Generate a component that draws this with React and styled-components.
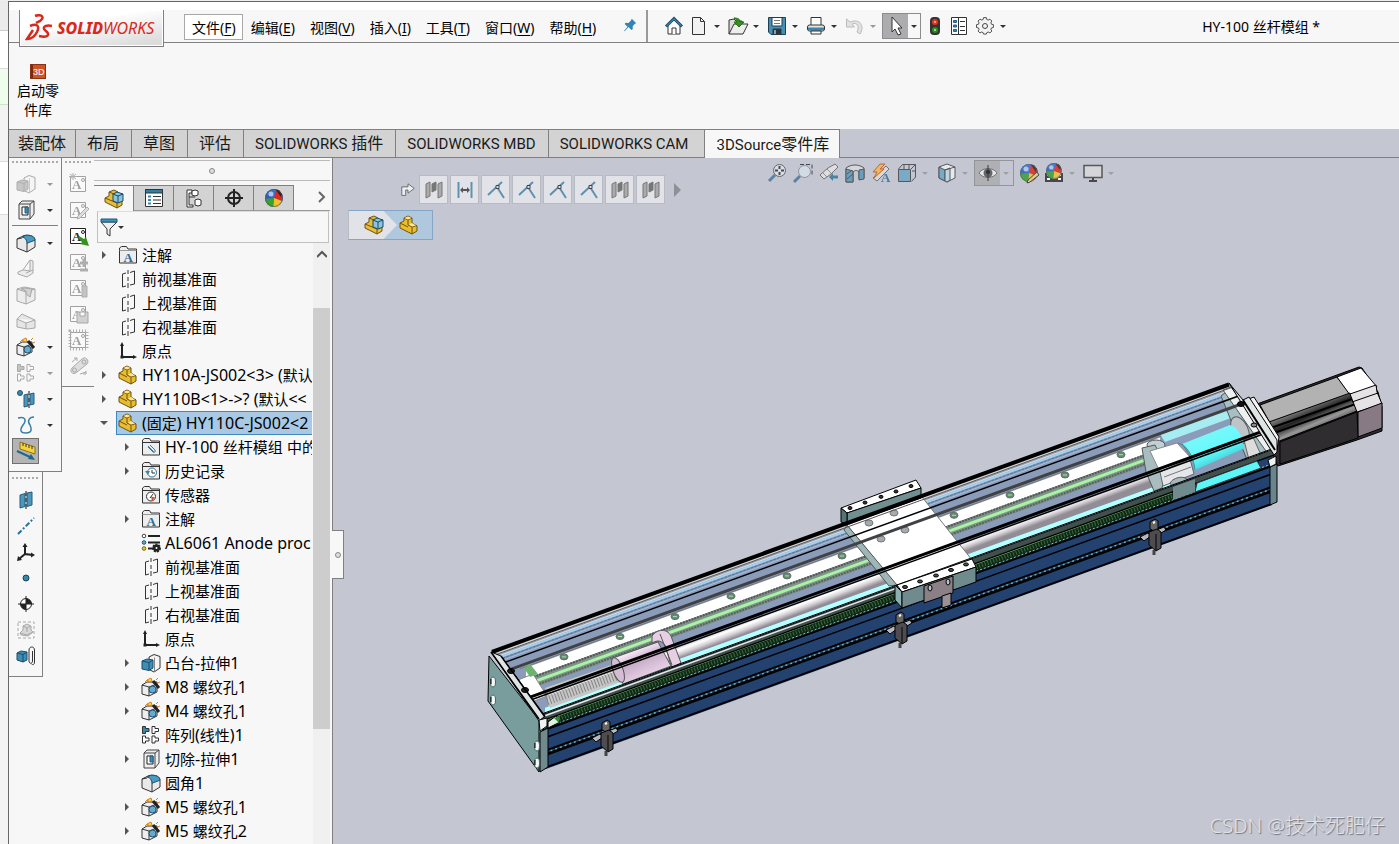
import React, { useState } from 'react';
import styled, { createGlobalStyle, css } from 'styled-components';

const GlobalStyle = createGlobalStyle`
  * {
    box-sizing: border-box;
  }

  body {
    margin: 0;
    background: #f3f3f3;
    color: #000;
    font-family: 'Noto Sans', 'Noto Sans CJK SC', sans-serif;
    font-size: 14px;
    overflow: hidden;
  }

  button {
    font: inherit;
    color: inherit;
    background: none;
    border: 0;
    padding: 0;
  }

  ul {
    list-style: none;
    margin: 0;
    padding: 0;
  }
`;

const LINE = '#808080';
const PANEL = '#f7f7f7';
const CANVAS = '#c4c7d2';

const Desktop = styled.div`
  display: flex;
  height: 100vh;
  padding-top: 1px;
  background: #efefef;
`;

const Backdrop = styled.div`
  display: flex;
  flex-direction: column;
  width: 8px;
  flex: none;
`;

const BackdropStrip = styled.div`
  height: ${props => props.size}px;
  background: ${props => props.fill};
  border-top: 1px solid ${props => props.edge || props.fill};
  flex: ${props => (props.grow ? '1' : 'none')};
`;

const AppWindow = styled.div`
  flex: 1;
  min-width: 0;
  display: flex;
  flex-direction: column;
  border-top: 1px solid #666;
  border-left: 1px solid #666;
  background: ${CANVAS};
`;

const Header = styled.header`
  display: flex;
  align-items: flex-start;
  height: 41px;
  border-top: 8px solid #fff;
  border-bottom: 1px solid ${LINE};
  background: ${PANEL};
  padding-left: 10px;
`;

const Logo = styled.div`
  display: flex;
  align-items: center;
  gap: 4px;
  width: 145px;
  height: 37px;
  padding-left: 5px;
  border: 1px solid ${LINE};
  border-top: 0;
  background: linear-gradient(170deg, #fff 35%, #dcdcdc 90%);
  box-shadow: inset 0 0 0 1px #fff;
  color: #da291c;
  font-size: 16px;
  font-style: italic;
  position: relative;
  z-index: 1;
  flex: none;

  b {
    font-weight: 800;
  }
`;

const Menu = styled.nav`
  display: flex;
  margin: 4px 0 0 20px;
`;

const MenuButton = styled.button`
  height: 26px;
  padding: 0 6px 0 7px;
  border: 1px solid ${props => (props.$active ? '#a8a8a8' : 'transparent')};
  background: ${props => (props.$active ? '#fff' : 'transparent')};
  white-space: nowrap;

  u {
    text-underline-offset: 2px;
  }
`;

const PinButton = styled.button`
  width: 26px;
  height: 33px;
  margin-left: 14px;
`;

const QuickBar = styled.div`
  display: flex;
  align-items: center;
  height: 32px;
  margin-left: 3px;
  padding-left: 13px;
  border-left: 2px solid #999;
`;

const ToolGroup = styled.div`
  display: flex;
  align-items: center;
  width: ${props => props.$width}px;
  height: 26px;
  flex: none;
  opacity: ${props => (props.$soft ? 0.85 : 1)};
  ${props =>
    props.$pressed &&
    css`
      border: 1px solid #8c8c90;
      background: linear-gradient(90deg, #acacae 25px, transparent 25px);
      margin-right: 3px;
    `}
`;

const IconButton = styled.button`
  display: flex;
  align-items: center;
  justify-content: center;
  width: ${props => props.$width || 26}px;
  height: 26px;
  flex: none;
`;

const Arrow = styled.span`
  width: 0;
  height: 0;
  border: 3px solid transparent;
  border-top-color: ${props => (props.$dim ? '#999' : '#333')};
  border-bottom: 0;
`;

const DocumentTitle = styled.div`
  margin: 7px 79px 0 auto;
  line-height: 20px;
  white-space: nowrap;
`;

const Ribbon = styled.section`
  height: 86px;
  padding: 20px 6px 0;
  background: ${PANEL};
`;

const RibbonButton = styled.button`
  display: flex;
  flex-direction: column;
  align-items: center;
  width: 46px;
  line-height: 19px;
`;

const Tabs = styled.div`
  display: flex;
  border-bottom: 1px solid ${LINE};
  height: 29px;
  flex: none;
`;

const Tab = styled.button`
  height: ${props => (props.$active ? 29 : 28)}px;
  padding: 0 ${props => props.$end || 12}px ${props => (props.$mixed ? 3 : 0)}px ${props => props.$start || 11}px;
  border-top: 1px solid ${LINE};
  border-right: 1px solid ${LINE};
  background: ${props => (props.$active ? PANEL : '#d3d3d3')};
  color: #1a1a1a;
  font-family: Roboto, 'Noto Sans CJK SC', sans-serif;
  font-size: 15px;
  white-space: nowrap;

  span {
    font-size: 16px;
  }
`;

const Body = styled.div`
  flex: 1;
  min-height: 0;
  display: flex;
`;

const Docks = styled.aside`
  display: flex;
  align-items: flex-start;
  width: 85px;
  background: ${PANEL};
  flex: none;
`;

const DockColumn = styled.div`
  display: flex;
  flex-direction: column;
`;

const Dock = styled.div`
  display: flex;
  flex-direction: column;
  width: ${props => props.$width}px;
  padding: ${props => props.$top || 3}px 3px 7px;
  border-bottom: 1px solid ${LINE};
  border-right: ${props => (props.$open ? '0' : `1px solid ${LINE}`)};
`;

const Grip = styled.div`
  height: 2px;
  margin-bottom: 8px;
  background: repeating-linear-gradient(90deg, #aaa 0 2px, transparent 2px 4px);
`;

const DockRow = styled.div`
  display: flex;
  align-items: center;
  justify-content: space-between;
  height: 26px;
  padding-right: 5px;
`;

const DockButton = styled.button`
  display: flex;
  align-items: center;
  justify-content: center;
  width: 27px;
  height: 26px;
  flex: none;
  border: 1px solid ${props => (props.$active ? '#707070' : 'transparent')};
  background: ${props => (props.$active ? '#b4b4b4' : 'transparent')};
  ${props =>
    props.$dim &&
    css`
      svg {
        filter: grayscale(1);
        opacity: 0.4;
      }
    `}
`;

const DockRule = styled.hr`
  width: 100%;
  margin: 2px 0 4px;
  border: 0;
  border-top: 1px solid ${LINE};
`;

const FeaturePanel = styled.section`
  display: flex;
  flex-direction: column;
  width: 239px;
  padding: 2px 2px 0 0;
  border-right: 1px solid ${LINE};
  background: ${PANEL};
  flex: none;
  position: relative;
`;

const PanelGrip = styled.div`
  display: flex;
  align-items: center;
  justify-content: center;
  height: 21px;
  border-top: 1px solid #bbb;
  border-bottom: 1px solid #bbb;
`;

const Knob = styled.span`
  width: 6px;
  height: 6px;
  border: 1px solid #888;
  border-radius: 50%;
  background: #ddd;
`;

const PanelTabs = styled.div`
  display: flex;
  margin-top: 4px;
  height: 26px;
  border-bottom: 1px solid #999;
  flex: none;
`;

const PanelTab = styled.button`
  display: flex;
  align-items: center;
  justify-content: center;
  width: 40px;
  height: ${props => (props.$active ? 26 : 25)}px;
  border-top: 1px solid ${LINE};
  border-right: 1px solid ${LINE};
  background: ${props => (props.$active ? PANEL : '#d3d3d3')};
`;

const MoreButton = styled.button`
  width: 16px;
  margin-left: auto;
`;

const FilterBox = styled.div`
  display: flex;
  align-items: center;
  height: 32px;
  margin: 0 1px 0 3px;
  padding-left: 2px;
  border: 1px solid #c0c0c0;
  border-top-color: #ddd;
  flex: none;
`;

const FilterInput = styled.input`
  flex: 1;
  min-width: 0;
  height: 28px;
  border: 0;
  outline: 0;
  background: transparent;
`;

const TreeArea = styled.div`
  flex: 1;
  min-height: 0;
  display: flex;
`;

const Tree = styled.ul`
  flex: 1;
  min-width: 0;
  overflow: hidden;
`;

const TreeRow = styled.li`
  display: flex;
  align-items: center;
  height: 24px;
  padding-left: ${props => 6 + props.$level * 23}px;
`;

const Expander = styled.button`
  display: flex;
  align-items: center;
  width: 16px;
  height: 24px;
  flex: none;
`;

const TreeItem = styled.div`
  display: flex;
  align-items: center;
  gap: 5px;
  flex: 1;
  min-width: 0;
  height: 24px;
  padding-left: 2px;
  border: 1px solid ${props => (props.$selected ? '#3f88bf' : 'transparent')};
  border-right: 0;
  background: ${props => (props.$selected ? '#a8c8e4' : 'transparent')};
  overflow: hidden;

  svg {
    flex: none;
  }
`;

const Label = styled.span`
  font-size: 15px;
  line-height: 22px;
  white-space: nowrap;
`;

const Latin = styled.span`
  font-size: 16px;
`;

const Scrollbar = styled.div`
  display: flex;
  flex-direction: column;
  align-items: center;
  width: 17px;
  margin-left: 1px;
  background: #f0f0f0;
  flex: none;
`;

const ScrollArrow = styled.button`
  width: 17px;
  height: 65px;
  flex: none;
  padding-top: 4px;
  display: flex;
  justify-content: center;
`;

const ScrollThumb = styled.div`
  width: 17px;
  height: 70%;
  background: #cdcdcd;
`;

// the collapse handle hangs over the edge of the graphics area
const CollapseHandle = styled.button`
  position: absolute;
  left: 100%;
  top: 372px;
  width: 12px;
  height: 49px;
  display: flex;
  align-items: center;
  justify-content: center;
  border: 1px solid ${LINE};
  border-left: 0;
  background: ${PANEL};
`;

const Graphics = styled.main`
  flex: 1;
  min-width: 0;
  display: flex;
  flex-direction: column;
  position: relative;
`;

const GraphicsTop = styled.div`
  display: flex;
  align-items: flex-start;
  height: 82px;
  padding: 2px 0 0 15px;
  flex: none;
`;

const SelectionTools = styled.div`
  width: 416px;
  padding-top: 15px;
  flex: none;
`;

const MateBar = styled.div`
  display: flex;
  align-items: center;
  gap: 2px;
  height: 29px;
  padding-left: 50px;
`;

const MateButton = styled.button`
  display: flex;
  align-items: center;
  justify-content: center;
  width: 29px;
  height: 29px;
  border: 1px solid #b9bbc2;
  background: #e2e3e8;
`;

const Crumbs = styled.div`
  display: flex;
  align-items: center;
  width: 85px;
  height: 30px;
  margin-top: 6px;
  border: 1px solid #84a4c8;
  border-left-color: #b9bbc2;
  background: #b0c8de;
`;

const Crumb = styled.button`
  display: flex;
  align-items: center;
  justify-content: flex-end;
  width: ${props => (props.$first ? 48 : 21)}px;
  height: 28px;
  padding-right: ${props => (props.$first ? 14 : 0)}px;
  background: ${props => (props.$first ? '#e2e3e8' : 'transparent')};
  clip-path: ${props => (props.$first ? 'polygon(0 0, 72% 0, 100% 50%, 72% 100%, 0 100%)' : 'none')};
`;

const HeadsUp = styled.div`
  display: flex;
  align-items: center;
  height: 26px;
`;

const Stage = styled.div`
  flex: 1;
  min-height: 0;

  svg {
    display: block;
    width: 100%;
    height: 100%;
  }
`;

const Watermark = styled.div`
  position: absolute;
  right: 14px;
  bottom: 4px;
  color: #e2e3e7;
  font-size: 20px;
  font-weight: 300;
  line-height: 28px;
  text-shadow: 1px 1px 1px #70727a;
  white-space: nowrap;
`;

const INK = '#333';
const BLUE = '#3c86ad';

const drawings = {
  home: (
    <g stroke={INK} fill="#fff">
      <path d="M3 8v9h12V8L9 3z" />
      <path d="M7 17v-6h4v6" />
      <path d="M1 9.500L9 1.500l8 8" fill="none" stroke="#1c4f6e" strokeWidth="3" />
      <path d="M1.500 9L9 1.800l7.500 7.200" fill="none" stroke="#4b9cc4" />
    </g>
  ),
  page: <path d="M2.500 .5h8l4 4v13h-12zM10.500 .5v4h4" fill="#f1f1f1" stroke={INK} />,
  open: (
    <g stroke={INK}>
      <path d="M0 17V3l5-1 2 2h6v3" fill="#ddd" />
      <path d="M0 17L5 7h14l-5 10z" fill="#eee" />
      <path d="M5 1c4 0 6 1 6 4h4l-5 5-5-5h3c0-2-1-3-3-4z" fill="#36921e" stroke="#257010" />
    </g>
  ),
  save: (
    <g stroke="#1f3f52">
      <path d="M.5 .5h17v17H3L.5 15z" fill="#4690b6" />
      <path d="M4 .5h10V9H4z" fill="#fff" />
      <path d="M6 3.500h6M6 6.500h6" stroke="#777" />
      <path d="M5 12h8v5H5z" fill="#333" />
      <path d="M7 13v4" stroke="#fff" />
    </g>
  ),
  print: (
    <g stroke={INK}>
      <path d="M4 8V.5h10V8" fill="#fff" />
      <rect x=".5" y="8" width="17" height="6" rx="2" fill="#e6e6e6" />
      <path d="M1 12h16" stroke={BLUE} strokeWidth="3" />
      <path d="M4 14h10v3H4z" fill="#fff" />
    </g>
  ),
  undo: <path d="M.5 2v8h8L6 7c5-2 8 2 5 8l3 2c5-8 0-16-10-12z" fill="#e2e2e2" stroke="#bbb" />,
  cursor: <path d="M5 0v15l3-3 3 6 3-1-3-6h4z" fill="#fff" stroke="#333" />,
  traffic: (
    <g>
      <rect x="4" y="0" width="10" height="18" rx="4" fill="#333" />
      <circle cx="9" cy="5" r="3" fill="#e5341b" />
      <circle cx="9" cy="13" r="3" fill="#2f8a22" />
      <circle cx="9" cy="5" r="1" fill="#ffb7a8" />
      <circle cx="9" cy="13" r="1" fill="#b9eab0" />
    </g>
  ),
  options: (
    <g stroke={INK} fill="#fff">
      <path d="M1.500 .5h15v17h-15z" />
      <path d="M10 4.500h5M10 9.500h5M10 13.500h5M8.500 1v16" />
      <path d="M3.500 3.500h3v2h-3zM3.500 8h3v2h-3zM3.500 12.500h3v2h-3z" fill={BLUE} stroke="#255f80" />
    </g>
  ),
  gear: (
    <g stroke="#444" fill="#f3f3f3">
      <path d="M7.500 1h3l.5 2 1.500.6 1.800-1 2 2-1 1.900.6 1.500 2.100.5v3l-2.100.5-.6 1.500 1 1.800-2 2-1.800-1-1.500.6-.5 1.600h-3l-.5-1.600-1.500-.6-1.800 1-2-2 1-1.800-.6-1.500L0 11.500v-3L2.100 8l.6-1.500-1-1.900 2-2 1.800 1L7 3z" transform="translate(.5 -.3) scale(.94)" />
      <circle cx="9" cy="9" r="2.500" />
    </g>
  ),
  pin: <path d="M11 2l5 5-1.500.7-2.500 2.800.2 3-1.700 1-3.200-3.200L3 16l-.6-.6 3.800-4.500L3 8l1-1.500 3.200.2 2.700-2.600z" fill="#2f86b5" />,
  source: (
    <g>
      <rect x="1.500" y="1.500" width="15" height="14" fill="#cf5423" stroke="#8b3213" />
      <path d="M3 2v13" stroke="#772a10" strokeWidth="2" />
      <text x="4" y="12" fontSize="9" fontFamily="Liberation Sans, sans-serif" fill="#fff">3D</text>
    </g>
  ),
  asm: (
    <g stroke="#6d5310" strokeLinejoin="round">
      <path d="M0 8l4-2V2l5-2 4 2v5l4 3v5l-5 3L0 12z" fill="#e9bd34" />
      <path d="M0 8l12 5v5M4 2l5 2v4" fill="none" />
      <path d="M8 4l4-2 6 2v7l-5 2-5-2z" fill="#8cc4df" stroke="#174a66" />
      <path d="M8 4l5 2v7M13 6l5-2" fill="none" stroke="#174a66" />
    </g>
  ),
  part: (
    <g stroke="#6d5310" strokeLinejoin="round">
      <path d="M0 7l4-2V2l4-2 4 2v5l5 3v5l-5 3L0 12z" fill="#eabd2e" />
      <path d="M4 2l4 2 4-2M8 4v5l4 2 5-1.500M12 11v7M0 7l8 4" fill="none" />
      <path d="M4.500 2L8 .5 11.500 2 8 3.500zM9 8.500l3-1.500 4 2.500-4 1z" fill="#ffe79a" stroke="none" />
    </g>
  ),
  list: (
    <g stroke={INK}>
      <path d="M.5 .5h17v17H.5z" fill="#fff" />
      <path d="M.5 .5h17V4H.5z" fill="#2e7ea8" />
      <path d="M8 7.500h8M8 11h8M8 14.500h8" />
      <path d="M3 7.500h3M3 11h3M3 14.500h3" stroke={BLUE} strokeWidth="2" />
    </g>
  ),
  config: (
    <g stroke={INK} fill="#fff">
      <path d="M2 1h5v3H4v12h4v2H2zM4 8h6" />
      <path d="M7 2l3-1 3 1v4l-3 1-3-1zM10 11l3-1 3 1v5l-3 1-3-1z" />
    </g>
  ),
  target: (
    <g fill="none" stroke="#222" strokeWidth="2">
      <circle cx="9" cy="9" r="6" />
      <path d="M9 0v18M0 9h18" />
    </g>
  ),
  ball: (
    <g>
      <circle cx="9" cy="9" r="9" fill="#2f62c0" />
      <path d="M9 9L1 5a9 9 0 0 1 12-4z" fill="#3272d6" />
      <path d="M9 9l2-9a9 9 0 0 1 6 12z" fill="#db2a20" />
      <path d="M9 9l8 3a9 9 0 0 1-9 6z" fill="#f1c02c" />
      <path d="M9 9l-1 9a9 9 0 0 1-8-8z" fill="#3aa02f" />
      <path d="M11 1l5 7 1-3-3-4z" fill="#222" />
      <circle cx="6" cy="5" r="2.500" fill="#fff" opacity=".6" />
      <circle cx="9" cy="9" r="8.500" fill="none" stroke="#555" strokeWidth=".7" />
    </g>
  ),
  funnel: (
    <g stroke={INK}>
      <path d="M1 4l6 7v5l3 2v-7l7-7z" fill="#eee" />
      <path d="M1 1h16v3H1z" fill="#3b93bf" stroke="#1d5877" />
    </g>
  ),
  annotation: (
    <g>
      <path d="M.5 17V2l2-1.500h5L9 3h8.500v14z" fill="#ededed" stroke={INK} />
      <path d="M.5 4.500h17" stroke="#999" />
      <text x="4.500" y="15.500" fontSize="13" fontWeight="700" fontFamily="Liberation Serif, serif" fill="#2a6c94">A</text>
    </g>
  ),
  mates: (
    <g stroke={INK}>
      <path d="M.5 17V2l2-1.500h5L9 3h8.500v14zM.5 4.500h17" fill="#ededed" />
      <path d="M6 8l6 6M8 7l5 5c1 2-1 3-2 2L6 9" fill="none" stroke="#347ea5" />
    </g>
  ),
  history: (
    <g stroke={INK}>
      <path d="M.5 17V2l2-1.500h5L9 3h8.500v14zM.5 4.500h17" fill="#ededed" />
      <circle cx="10" cy="10.500" r="4.500" fill="#fff" stroke="#2f6f95" />
      <path d="M10 8v3h3" fill="none" />
      <path d="M3 9l3 4 2-4z" fill={BLUE} stroke="none" />
    </g>
  ),
  sensor: (
    <g stroke={INK}>
      <path d="M.5 17V2l2-1.500h5L9 3h8.500v14zM.5 4.500h17" fill="#ededed" />
      <circle cx="9" cy="10.500" r="4.500" fill="#fff" />
      <path d="M9 10.500l4 1-3 3.500z" fill="#e14e22" stroke="none" />
      <path d="M8 12l3-4" />
    </g>
  ),
  plane: (
    <g fill="none" stroke="#333">
      <path d="M7 3L3.500 4v13L7 16M11 2.500l4.500-1.500v13l-4.500 1" />
      <path d="M9 0v4M9 7v4M9 13v5" />
    </g>
  ),
  origin: (
    <g stroke="#222" fill="#222" strokeWidth="2">
      <path d="M3 3v12h12" fill="none" />
      <path d="M3 0l2 4H1zM18 15l-4-2v4zM1.500 13.500h3v3h-3z" stroke="none" />
    </g>
  ),
  material: (
    <g>
      <path d="M6 2h12M6 8.500h12M6 14.500h6" stroke="#222" strokeWidth="2" />
      <circle cx="2" cy="2" r="1.800" fill="#fff" stroke="#444" />
      <circle cx="2" cy="8.500" r="1.800" fill="#63a9cc" stroke="#215472" />
      <circle cx="2" cy="14.500" r="1.800" fill="#efc52f" stroke="#80620f" />
      <circle cx="14.500" cy="14" r="3.500" fill="#222" stroke="#222" strokeDasharray="2 1" strokeWidth="2" />
      <circle cx="14.500" cy="14" r="1" fill="#fff" />
    </g>
  ),
  extrude: (
    <g stroke="#333" strokeLinejoin="round">
      <path d="M7 3l5-2.500 6 2V14l-6 4-4-2z" fill="#f4f4f4" />
      <path d="M12.500 3.500v14" stroke="#888" />
      <path d="M0 7l5-2 6 1v8l-4 2.500L0 15z" fill="#3f8db4" stroke="#1b4d69" />
      <path d="M0 7l7 1.500 4-2.500M7 8.500v8" fill="none" stroke="#1b4d69" />
    </g>
  ),
  hole: (
    <g stroke="#333" strokeLinejoin="round">
      <path d="M0 7l5-3h10v10l-8 4-7-2z" fill="#eee" />
      <path d="M0 7l7 2 8-3M7 9v9" fill="none" />
      <circle cx="10.500" cy="11.500" r="3.500" fill="#65acd0" stroke="#1d4e6a" />
      <path d="M11 3l6 7" stroke="#222" strokeWidth="3" />
      <path d="M5 2l4-2 1 3-2 1zM14 2l2-2M16 5l2-1M3 4l2-2" stroke="#d8801c" fill="#ffd34a" />
    </g>
  ),
  pattern: (
    <g stroke={INK} fill="#fff">
      <path d="M.5 .5h3v2H7v3H3.500v2h-3z" fill="#3c86ad" />
      <path d="M10 .5h3v2h3.500v3H13v2h-3zM.5 10h3v2H7v3H3.500v2h-3zM10 10h3v2h3.500v3H13v2h-3z" />
    </g>
  ),
  cut: (
    <g stroke="#444" strokeLinejoin="round">
      <path d="M2 3l3-3h12v13l-4 5H2z" fill="#eee" />
      <path d="M13 3l4-3M2 3h11v15" fill="none" />
      <path d="M5 6h6v8H5z" fill="#fff" stroke="#222" />
      <path d="M8 6h3v6H8z" fill="#3c8db6" stroke="#225f80" />
    </g>
  ),
  fillet: (
    <g stroke="#333" strokeLinejoin="round">
      <path d="M0 5l7-3.500c7-1 11 1 11 5V13l-8 5-10-4z" fill="#e9e9e9" />
      <path d="M5 3l4-1.800c6 0 9 2 9 5l-8 3c0-3-2-6-5-6.200z" fill="#4b9ac2" stroke="#1e536f" />
      <path d="M10 9v9M0 5l5-1" />
    </g>
  ),
  rib: <path d="M1 12l5-2 7-10 3 1v12l-6 4-9-3zM6 10l7 1V1M9 13l7-3" fill="#ddd" stroke={INK} />,
  shell: (
    <g stroke={INK} strokeLinejoin="round">
      <path d="M0 3l7-2 11 2v11l-9 4-9-3z" fill="#ddd" />
      <path d="M0 3l9 3v12M9 6l9-3" fill="none" />
      <path d="M4 3l4-1 7 1-2 8-4-3V5z" fill="#999" />
    </g>
  ),
  draft: <path d="M0 7l5-5 13 6v8l-8 1-10-2zM0 7l9 4 9-3M9 11v6" fill="#ccc" stroke={INK} />,
  refplane: (
    <g>
      <path d="M3 4l5-1.500v13L3 17zM10 2l5-1v13l-5 1.500z" fill="#4b97bd" stroke="#265d7b" />
      <path d="M9 0v5M9 7v4M9 13v5" stroke="#111" />
    </g>
  ),
  mirror: (
    <g>
      <circle cx="3" cy="3" r="2.500" fill={BLUE} stroke="#205571" />
      <path d="M7 5l4-1v12l-4 1zM13 4l4-1v11l-4 1z" fill="#4b97bd" stroke="#265d7b" />
      <path d="M12 1v4M12 8v4M12 14v4" stroke="#111" />
    </g>
  ),
  curve: <path d="M1 2c7-2 9 2 5 7-4 6-2 8 3 8 6 0 6-4 4-8-3-4-1-8 4-8" fill="none" stroke="#347fa8" strokeWidth="1.500" />,
  ruler: (
    <g>
      <path d="M3 0l15 5v7L3 7z" fill="#f5d23c" stroke="#8b7519" />
      <path d="M6 1v3M9 2v3M12 3v3M15 4v3" stroke="#333" />
      <path d="M0 9l13 6" stroke="#1f678f" strokeWidth="2" />
      <path d="M18 18l-7-1 3-5z" fill="#1f678f" />
    </g>
  ),
  axis: <path d="M1 17L17 1" stroke="#2a7299" strokeWidth="2" strokeDasharray="5 2 2 2" />,
  csys: (
    <g stroke="#222" strokeWidth="2" fill="#222">
      <path d="M8 2v9l8 1M8 11l-6 5" fill="none" />
      <path d="M8 0l2.500 4h-5zM18 12l-4-2.500v5zM0 18l1-5 4 4z" stroke="none" />
    </g>
  ),
  point: <circle cx="9" cy="9" r="3" fill={BLUE} stroke="#19435b" />,
  mass: (
    <g>
      <circle cx="9" cy="9" r="5.500" fill="#fff" stroke="#222" />
      <path d="M9 9V3.500A5.500 5.500 0 0 1 14.500 9zM9 9v5.500A5.500 5.500 0 0 1 3.500 9z" fill="#222" />
      <path d="M9 1v16M1 9h16" stroke="#222" />
    </g>
  ),
  box: (
    <g stroke={INK}>
      <path d="M1 1h16v16H1z" fill="none" strokeDasharray="3 2" />
      <path d="M3 12l3-3V5l4-2 4 2v4l2 2-5 4-7-1z" fill="#aaa" />
      <path d="M6 5l4 2 4-2M10 7v4M3 12l7 2 6-3" fill="none" />
    </g>
  ),
  clip: (
    <g>
      <path d="M0 6l4-2 6 1v8l-4 2-6-2z" fill="#3f8db4" stroke="#1b4d69" />
      <path d="M0 6l6 1.500L10 5M6 7.500V15" fill="none" stroke="#1b4d69" />
      <path d="M15.500 4v10c0 3-3.500 3-3.500 0V3c0-4 5.500-4 5.500 0v12c0 3-2 3-3 2" fill="none" stroke="#333" />
    </g>
  ),
  note: (
    <g>
      <path d="M.5 1.500h15v15H.5z" fill="#fff" stroke="#222" />
      <text x="2" y="14" fontSize="13" fontWeight="700" fontFamily="Liberation Serif, serif" fill="#222">A</text>
      <circle cx="13" cy="5" r="1.500" fill="none" stroke="#222" />
    </g>
  ),
  chain: (
    <g fill="none" stroke={INK}>
      <path d="M2 5l5-4M7 4V1H4M13 17h3v-3M10 17l6-2" />
      <path d="M3 10l9-8c3-3 8 1 5 5l-10 8c-4 4-9-1-4-5z" fill="#bbb" />
      <circle cx="14" cy="5" r="2" />
      <circle cx="4.500" cy="13" r="2" />
    </g>
  ),
  turn: <path d="M1 16V5h8V1l8 6-8 6V9H6v7z" fill="#eceef1" stroke="#555" />,
  mate: (
    <g stroke="#777" fill="#ababab">
      <path d="M1 3l4-2v14l-4 2zM13 3l4-2v14l-4 2z" />
      <path d="M7 3l4-2v8l-4 2z" fill="#777" />
    </g>
  ),
  distance: (
    <g stroke="#5f93b2" strokeWidth="2">
      <path d="M2.500 1v16M15.500 1v16" />
      <path d="M5 9h8" stroke="#555" />
      <path d="M4 9l3-3v6zM14 9l-3-3v6z" fill="#555" stroke="none" />
    </g>
  ),
  vertex: (
    <g>
      <path d="M1 14L15 1M10 6l7 11" stroke="#5f91ae" strokeWidth="2" />
      <path d="M9 4.500h3v3H9z" fill="#ddd" stroke="#444" />
    </g>
  ),
  zoomfit: (
    <g>
      <path d="M1 17l6-6" stroke="#49789a" strokeWidth="3" />
      <circle cx="11.500" cy="6.500" r="6" fill="#dce2ea" stroke="#555" />
      <path d="M11.500 2v3M11.500 8v3M7 6.500h3M13 6.500h3" stroke="#333" strokeWidth="2" />
    </g>
  ),
  zoomarea: (
    <g>
      <path d="M6 .5h12V12" fill="none" stroke="#333" strokeDasharray="4 2" />
      <path d="M0 18l6-6" stroke="#49789a" strokeWidth="3" />
      <circle cx="10.500" cy="7.500" r="6" fill="#d5dfe8" stroke="#888" />
    </g>
  ),
  prevview: (
    <g>
      <path d="M0 11l4 4 7-5 7-7-3-3-7 4z" fill="#e3e3e3" stroke="#666" />
      <path d="M3 9l4 4M7 5l4 4" stroke="#888" />
      <path d="M9 13l4-4v2.500h5v3h-5V17z" fill="#39769b" />
    </g>
  ),
  section: (
    <g stroke="#444">
      <path d="M0 4c5-4 13-4 18 0v10l-5 1V8c-2-2-4-2-6 0v10H0z" fill="#d7dade" />
      <path d="M0 5l7 2v11H0zM13 6l5-1v10l-5 1z" fill="#5a98ba" />
      <path d="M1 10l5-4M1 15l6-5" />
    </g>
  ),
  dynamic: (
    <g>
      <path d="M1 14l4 3L17 5l-3-3z" fill="#ddd" stroke="#666" />
      <path d="M8 0L1 8h4l-3 6L12 5H8l5-5z" fill="#f4b64f" stroke="#c0561a" />
      <text x="9" y="18" fontSize="13" fontWeight="700" fontFamily="Liberation Serif, serif" fill="#356f93">A</text>
    </g>
  ),
  orient: (
    <g stroke="#444" fill="none">
      <path d="M.5 5l4-4.500h13V13l-4 4.500M13 5l4.500-4.500M18 7h-4M6 1v4M11 1v4" />
      <path d="M.5 5.500h12v12H.5z" fill="#6fa6c5" />
    </g>
  ),
  cube: (
    <g stroke="#444">
      <path d="M1 3l8-3 8 3v11l-8 4-8-4z" fill="#eef0f2" />
      <path d="M1 3l6 3v11l-6-3z" fill="#6ba5c5" />
      <path d="M7 6l5-2v12l-3 2-2-1z" fill="#b7d9ea" />
      <path d="M7 6l10-3" />
    </g>
  ),
  eye: (
    <g>
      <path d="M0 9c4-6 14-6 18 0-4 6-14 6-18 0z" fill="#eee" stroke="#666" />
      <circle cx="9" cy="9" r="4.500" fill="#555" />
      <circle cx="9" cy="8" r="2" fill="#111" />
      <path d="M9 1v16" stroke="#222" />
    </g>
  ),
  screen: (
    <g>
      <path d="M0 1.500h18v12H0z" fill="#d8d9dc" stroke="#444" strokeWidth="1.500" />
      <path d="M9 14v3M5 17h8" stroke="#333" strokeWidth="2" />
    </g>
  ),
};

drawings.appearance = (
  <g>
    {drawings.ball}
    <path d="M17 8l-9 8-1 3 3-1 9-7z" fill="#ecca70" stroke="#333" />
  </g>
);

drawings.scene = (
  <g>
    <path d="M0 9h18v9H0z" fill="#333" />
    <path d="M2 11h2M2 15h3M14 11h2M13 15h3" stroke="#fff" strokeWidth="2" />
    <g transform="translate(1 -1) scale(.88)">{drawings.ball}</g>
  </g>
);

const Icon = ({ name, size = 18 }) => (
  <svg width={size} height={size} viewBox="0 0 18 18" aria-hidden="true" overflow="visible">
    {drawings[name]}
  </svg>
);

const menus = [
  ['文件', 'F'],
  ['编辑', 'E'],
  ['视图', 'V'],
  ['插入', 'I'],
  ['工具', 'T'],
  ['窗口', 'W'],
  ['帮助', 'H'],
];

const quickTools = [
  { icon: 'home', width: 25 },
  { icon: 'page', width: 39, arrow: true },
  { icon: 'open', width: 39, arrow: true },
  { icon: 'save', width: 39, arrow: true },
  { icon: 'print', width: 39, arrow: true },
  { icon: 'undo', width: 40, arrow: true, dim: true },
  { icon: 'cursor', width: 39, arrow: true, pressed: true },
  { icon: 'traffic', width: 22 },
  { icon: 'options', width: 26 },
  { icon: 'gear', width: 38, arrow: true },
];

const headsUpTools = [
  { icon: 'zoomfit', width: 26 },
  { icon: 'zoomarea', width: 26 },
  { icon: 'prevview', width: 26 },
  { icon: 'section', width: 26 },
  { icon: 'dynamic', width: 26 },
  { icon: 'orient', width: 40, arrow: true, dim: true },
  { icon: 'cube', width: 40, arrow: true, dim: true },
  { icon: 'eye', width: 40, arrow: true, dim: true, pressed: true },
  { icon: 'appearance', width: 24 },
  { icon: 'scene', width: 39, arrow: true, dim: true },
  { icon: 'screen', width: 40, arrow: true, dim: true },
];

const ribbonTabs = [
  { cjk: '装配体', start: 9, end: 9 },
  { cjk: '布局' },
  { cjk: '草图' },
  { cjk: '评估' },
  { latin: 'SOLIDWORKS ', cjk: '插件' },
  { latin: 'SOLIDWORKS MBD' },
  { latin: 'SOLIDWORKS CAM', end: 16 },
  { latin: '3DSource', cjk: '零件库', end: 10 },
];

const featureDock = [
  { icon: 'extrude', arrow: true, dim: true },
  { icon: 'cut', arrow: true },
  { rule: true },
  { icon: 'fillet', arrow: true },
  { icon: 'rib', dim: true },
  { icon: 'shell', dim: true },
  { icon: 'draft', dim: true },
  { icon: 'hole', arrow: true },
  { icon: 'pattern', arrow: true, dim: true },
  { icon: 'mirror', arrow: true },
  { icon: 'curve', arrow: true },
  { icon: 'ruler', active: true },
];

const referenceDock = [
  { icon: 'refplane' },
  { icon: 'axis' },
  { icon: 'csys' },
  { icon: 'point' },
  { icon: 'mass' },
  { icon: 'box', dim: true },
  { icon: 'clip' },
];

const panelTabs = ['asm', 'list', 'config', 'target', 'ball'];

const mateButtons = ['mate', 'distance', 'vertex', 'vertex', 'vertex', 'vertex', 'mate', 'mate'];

const treeItems = [
  { level: 0, icon: 'annotation', label: '注解', fold: true },
  { level: 0, icon: 'plane', label: '前视基准面' },
  { level: 0, icon: 'plane', label: '上视基准面' },
  { level: 0, icon: 'plane', label: '右视基准面' },
  { level: 0, icon: 'origin', label: '原点' },
  { level: 0, icon: 'part', label: 'HY110A-JS002<3> (默认', fold: true },
  { level: 0, icon: 'part', label: 'HY110B<1>->? (默认<<', fold: true },
  { level: 0, icon: 'part', label: '(固定) HY110C-JS002<2', fold: true, open: true },
  { level: 1, icon: 'mates', label: 'HY-100 丝杆模组 中的', fold: true },
  { level: 1, icon: 'history', label: '历史记录', fold: true },
  { level: 1, icon: 'sensor', label: '传感器' },
  { level: 1, icon: 'annotation', label: '注解', fold: true },
  { level: 1, icon: 'material', label: 'AL6061 Anode proc' },
  { level: 1, icon: 'plane', label: '前视基准面' },
  { level: 1, icon: 'plane', label: '上视基准面' },
  { level: 1, icon: 'plane', label: '右视基准面' },
  { level: 1, icon: 'origin', label: '原点' },
  { level: 1, icon: 'extrude', label: '凸台-拉伸1', fold: true },
  { level: 1, icon: 'hole', label: 'M8 螺纹孔1', fold: true },
  { level: 1, icon: 'hole', label: 'M4 螺纹孔1', fold: true },
  { level: 1, icon: 'pattern', label: '阵列(线性)1' },
  { level: 1, icon: 'cut', label: '切除-拉伸1', fold: true },
  { level: 1, icon: 'fillet', label: '圆角1' },
  { level: 1, icon: 'hole', label: 'M5 螺纹孔1', fold: true },
  { level: 1, icon: 'hole', label: 'M5 螺纹孔2', fold: true },
];

// Latin runs are set one pixel larger than the Chinese around them
const MixedText = ({ text }) =>
  text.split(/([\x20-\x7e]+)/).map((run, index) =>
    index % 2 ? <Latin key={index}>{run}</Latin> : run
  );

const Tools = ({ items, soft }) =>
  items.map(({ icon, width, arrow, dim, pressed }) => (
    <ToolGroup key={icon} $width={width} $pressed={pressed} $soft={soft}>
      <IconButton aria-label={icon} $width={Math.min(width, 25)}>
        <Icon name={icon} />
      </IconButton>
      {arrow && (
        <IconButton aria-label={`${icon} menu`} $width={12}>
          <Arrow $dim={dim} />
        </IconButton>
      )}
    </ToolGroup>
  ));

const DockItems = ({ items }) =>
  items.map((item, index) =>
    item.rule ? (
      <DockRule key={index} />
    ) : (
      <DockRow key={index}>
        <DockButton aria-label={item.icon} $dim={item.dim} $active={item.active}>
          <Icon name={item.icon} />
        </DockButton>
        {item.arrow && <Arrow $dim={item.dim} />}
      </DockRow>
    )
  );

const AnnotationDock = () => (
  <Dock $width={32} $open>
    <Grip />
    {['new', 'edit', 'export', 'add', 'lock', 'save', 'frame', 'link'].map(name => (
      <DockRow key={name}>
        <DockButton aria-label={`${name} annotation`} $dim={name !== 'export'}>
          <svg width="18" height="18" viewBox="0 0 18 18" overflow="visible">
            {name === 'link' ? drawings.chain : drawings.note}
            {name === 'new' && <path d="M3-2v7M-1 1.500h8M0-1l6 5M6-1L0 4" stroke="#444" />}
            {name === 'edit' && <path d="M17 6L8 15l-1 3 3-1 9-9z" fill="#bbb" stroke="#444" />}
            {name === 'export' && <path d="M9 9l5 3 2-2 3 9-9-2 2-2-4-4z" fill="#36921e" />}
            {name === 'add' && <path d="M14 6v8M10 10h8M10 17h8" stroke="#444" strokeWidth="3" />}
            {name === 'lock' && <path d="M12 7h5v11h-5z" fill="#777" stroke="#444" />}
            {name === 'save' && <path d="M7 7h11v11H7zM10 7v4h5V7" fill="#999" stroke="#333" />}
            {name === 'frame' && (
              <path d="M0 0h17v18H0z" fill="none" stroke="#444" strokeWidth="3" strokeDasharray="1 2" />
            )}
          </svg>
        </DockButton>
      </DockRow>
    ))}
  </Dock>
);

// Every long edge of the module runs parallel; heights are measured down from the rear edge.
const SLOPE = 0.363;
const edgeY = (x, drop) => Math.round(10 * (830.6 - SLOPE * x + drop)) / 10;

const Edge = ({ drop, from = 480, to = 1290, ...rest }) => (
  <path d={`M${from} ${edgeY(from, drop)}L${to} ${edgeY(to, drop)}`} fill="none" stroke="#000" {...rest} />
);

const Band = ({ drop, depth, from = 480, to = 1290, ...rest }) => (
  <path
    d={`M${from} ${edgeY(from, drop)}L${to} ${edgeY(to, drop)}V${edgeY(to, drop + depth)}L${from} ${edgeY(from, drop + depth)}z`}
    {...rest}
  />
);

const SensorClip = ({ x, y }) => (
  <g transform={`translate(${x} ${y})`} stroke="#000">
    <path d="M-14 0l8-4 3 3-7 5zM0-6l10-4 2 3-10 6z" fill="#b9b9bd" />
    <path d="M-4-15l5-3 3 2v8l-4 2-4-2z" fill="#666" />
    <path d="M-5-5l8-3 4 3v16l-5 3-7-6z" fill="#4f4c50" />
    <path d="M2-3v17" />
    <path d="M-1-14l2-1" stroke="#fff" strokeWidth="2" />
    <path d="M0 13v5" stroke="#444" strokeWidth="3" />
  </g>
);

const railHoles = [564, 620, 675, 731, 787, 842, 954, 1010, 1065, 1121];

const Model = () => (
  <svg viewBox="333 240 1066 604" preserveAspectRatio="xMidYMid meet" role="img" aria-label="HY-100">
    <defs>
      <linearGradient id="rod" gradientUnits="userSpaceOnUse" x1="740" y1="622" x2="744.500" y2="634">
        <stop offset="0" stopColor="#b9b4bb" />
        <stop offset="0.35" stopColor="#fff" />
        <stop offset="0.65" stopColor="#d9d5da" />
        <stop offset="1" stopColor="#928d95" />
      </linearGradient>
      <linearGradient id="nut" gradientUnits="userSpaceOnUse" x1="636" y1="650" x2="648" y2="676">
        <stop offset="0" stopColor="#f5e8f5" />
        <stop offset="0.4" stopColor="#c9aec9" />
        <stop offset="1" stopColor="#e7d1e7" />
      </linearGradient>
      <linearGradient id="corner" gradientUnits="userSpaceOnUse" x1="1305" y1="408" x2="1317" y2="436">
        <stop offset="0" stopColor="#777" />
        <stop offset="0.3" stopColor="#222" />
        <stop offset="0.6" stopColor="#999" />
        <stop offset="1" stopColor="#2a282b" />
      </linearGradient>
      <linearGradient id="coupling" gradientUnits="userSpaceOnUse" x1="1205" y1="432" x2="1220" y2="466">
        <stop offset="0" stopColor="#7df7f7" />
        <stop offset="0.55" stopColor="#62fbff" />
        <stop offset="1" stopColor="#3cc7cb" />
      </linearGradient>
      <clipPath id="deck">
        <path d="M491 651L1229 382l47 69-736 270z" />
      </clipPath>
      <clipPath id="side">
        <path d="M540 710L1272 445v60L546 769z" />
      </clipPath>
    </defs>

    {/* motor */}
    <g stroke="#000" strokeLinejoin="round">
      <path d="M1257 404l80-29 22-8 3 1 16 24 4 15v24l-25 9-79 26-16-30z" fill="#2e2a2f" />
      <path d="M1260 405l77-28 13 17-80 29z" fill="#b2b2b2" />
      <path d="M1337 377l24-9 16 19-27 8z" fill="#fff" />
      <path d="M1269 422l81-29 7 18-80 31z" fill="url(#corner)" />
      <path d="M1271 428l84-30M1274 433l104-37" strokeWidth="2" />
      <path d="M1350 394l26-9 1 7 5 12-25 8z" fill="#e6e3e7" />
      <path d="M1352 402l26-9" />
      <path d="M1358 412l24-9v25l-24 9z" fill="#877a84" />
      <path d="M1280 442l77-30 1 26-78 26z" fill="#302d31" />
      <path d="M1246 400l8-3 25 40-2 13z" fill="#f4f4f4" />
    </g>

    {/* aluminium profile, front face */}
    <g clipPath="url(#side)">
      <Band drop={80} depth={60} fill="#23426f" />
      <Band drop={82} depth={14} to={1195} fill="#132717" />
      <Edge drop={87} to={1172} stroke="#8bec8a" strokeWidth="2" />
      <Edge drop={91} to={1195} stroke="#35703c" strokeWidth="4" strokeDasharray="1 2" />
      <Edge drop={95} stroke="#79cbd0" strokeDasharray="2 2" />
      <Edge drop={97} strokeWidth="2" />
      <Edge drop={105} strokeWidth="1.500" />
      <Edge drop={118} strokeWidth="2" />
      <Edge drop={122} strokeWidth="3" />
      <Edge drop={120} stroke="#5bb0bd" strokeWidth="1.500" strokeDasharray="2 3" />
      <Edge drop={135} strokeWidth="2" />
    </g>

    {/* covered interior */}
    <g clipPath="url(#deck)">
      <Band drop={0} depth={90} fill="#8a9cb9" />
      <Band drop={0} depth={7} fill="#d4d6dd" />
      <Edge drop={5} stroke="#8e949c" />
      <Edge drop={8} stroke="#9ed2f5" strokeWidth="2" />
      <Edge drop={10} stroke="#56738e" strokeDasharray="3 1" />
      <Edge drop={12} stroke="#a9bfdc" />
      <Band drop={28} depth={11} from={526} to={1160} fill="#fff" />
      <Edge drop={27} from={520} stroke="#777" />
      <Band drop={39} depth={12} from={530} to={1150} fill="#7f938a" />
      <Edge drop={40} to={1150} stroke="#555" strokeDasharray="2 1" strokeWidth="2" />
      <Edge drop={45} from={530} to={1150} stroke="#a9f3a4" strokeWidth="3" />
      <Edge drop={49} to={1150} stroke="#55645c" strokeDasharray="2 1" strokeWidth="2" />
      <Band drop={62} depth={13} from={548} to={1162} fill="url(#rod)" />
      <Band drop={75} depth={6} from={545} to={1170} fill="#b4ffff" />
      {railHoles.map(x => (
        <g key={x}>
          <ellipse cx={x} cy={edgeY(x, 31)} rx="4" ry="3" fill="#668b72" stroke="#60706a" />
          <path d={`M${x - 2} ${edgeY(x, 31)}h4`} stroke="#a4e3aa" />
        </g>
      ))}

      {/* left bearing and screw */}
      <path d="M518 680l15-6 14 22-18 7z" fill="#fff" stroke="#888" />
      <path d="M524 668l6 9 8-3-8-10z" fill="#6db36e" />
      <path d="M545 688l75-26 6 18-76 28z" fill="#c6c6c6" />
      <path d="M546 698l78-28" stroke="#858585" strokeWidth="15" strokeDasharray="1 2" />
      <path d="M548 694l76-27" stroke="#e8e8e8" strokeWidth="3" strokeDasharray="2 1" />
      <path d="M613 658l45-16 13 24-48 18z" fill="url(#nut)" stroke="#555" />
      <ellipse cx="618" cy="670" rx="5" ry="13" transform="rotate(-20 618 670)" fill="#d4bdd4" stroke="#555" />
      <path d="M652 636c5-7 15-8 19 0l10 27-9 5-7-23c-5-6-9-4-13-2z" fill="#e6cfe3" stroke="#555" />
      <path d="M660 634l12 31" stroke="#555" />

      {/* right bearing and coupling */}
      <path d="M1160 434l66-24 5 8-66 24z" fill="#a7ecf0" />
      <ellipse cx="1156" cy="445" rx="9" ry="5" fill="#c2d0d4" stroke="#555" />
      <path d="M1142 448l4 24 8 19 8-3 5-19-12-24z" fill="#a8bdbf" stroke="#555" />
      <path d="M1150 451l27-8 14 15-31 14z" fill="#fff" stroke="#888" />
      <path d="M1160 472l30-13 4 15-31 12z" fill="#e4e6e9" stroke="#666" />
      <path d="M1164 477l27-10M1178 443l5 2 9 14" fill="none" stroke="#777" />
      <path d="M1170 484c1-6 15-10 18-3" fill="#a6b7ba" stroke="#555" />
      <path d="M1221 396l9-7 48 68-28 10z" fill="#a6bfc2" stroke="#555" />
      <path d="M1223 390l8-3 46 65-9 2z" fill="#eef1f2" stroke="#555" />
      <ellipse cx="1240" cy="430" rx="8" ry="14" transform="rotate(-25 1240 430)" fill="#bfc4c8" stroke="#555" />
      <path d="M1244 440l9-3 8 18-12 5z" fill="#ddd" stroke="#666" />
      <path d="M1182 444l48-19c8 2 14 12 13 24l-48 21c-1-10-5-20-13-26z" fill="url(#coupling)" />
      <path d="M1182 444c8 6 12 16 13 26" fill="none" stroke="#2a999d" />
    </g>

    {/* carriage */}
    <g stroke="#000" strokeLinejoin="round">
      <path d="M847 525l75-28 50 63-75 26z" fill="#fff" stroke="#777" />
      <path d="M847 525l-3 5 45 56 8-1z" fill="#9fb6b8" stroke="#555" />
      <path d="M841 508l75-28 5 8-74 25z" fill="#fff" />
      <path d="M847 513l74-25v10l-74 26z" fill="#718e91" />
      <path d="M841 508l6 5v11l-6-2z" fill="#557477" />
      {[850, 865, 881, 896, 911].map(x => (
        <ellipse key={x} cx={x} cy={508 - (x - 850) * 0.36} rx="2" ry="1.500" fill="#333" />
      ))}
      {[[869, 523], [894, 513], [881, 539], [905, 530]].map(([x, y]) => (
        <ellipse key={x} cx={x} cy={y} rx="4" ry="3" fill="#a3abb0" stroke="#777" />
      ))}
    </g>

    {/* cover edges run over the carriage plate */}
    <g clipPath="url(#deck)">
      <Edge drop={15} strokeWidth="1.500" />
      <Edge drop={24} stroke="#404144" strokeWidth="3" />
      <Edge drop={59} from={526} strokeWidth="3" />
      <Edge drop={62} from={530} strokeWidth="1.500" />
      <Edge drop={80} from={538} />
    </g>
    <Edge drop={0} from={492} to={1229} strokeWidth="4" />
    <Edge drop={4} from={496} to={1231} stroke="#555" />
    <Edge drop={84} from={540} to={1274} stroke="#41504e" strokeWidth="5" />
    <Edge drop={83} from={545} to={960} stroke="#e8eaeb" strokeWidth="1.500" />
    <Edge drop={81} from={538} to={1276} />
    <Edge drop={87} from={542} to={1274} strokeWidth="1.500" />

    <path d="M1197 483l60-22 4 7-66 24z" fill="#5cf5f8" stroke="#333" />
    <path d="M1173 487l22-8v13l-22 8z" fill="#6f8b8e" />

    <g stroke="#000" strokeLinejoin="round">
      <path d="M895 585l7 7v16l-7-8z" fill="#8bb0b2" />
      <path d="M897 585l75-26 4 8-74 25z" fill="#fff" />
      <path d="M902 592l74-25v15l-74 26z" fill="#6f8b8e" />
      <path d="M924 586l29-10v17l-29 10z" fill="#8a8086" />
      <path d="M942 596l9-3v12l-9 3z" fill="#9a9196" />
      <ellipse cx="930" cy="588" rx="2" ry="3" fill="#b9c3c7" />
      <ellipse cx="948" cy="582" rx="2" ry="3" fill="#b9c3c7" />
      {[905, 920, 936, 951, 966].map(x => (
        <ellipse key={x} cx={x} cy={587 - (x - 905) * 0.37} rx="2.500" ry="1.500" fill="#465153" />
      ))}
    </g>

    {/* end plates */}
    <g stroke="#000" strokeLinejoin="round">
      <path d="M489 656l50 64v52l-51-71z" fill="#799d9d" />
      <path d="M491 652l10 4 44 60-6 5z" fill="#dfe4e5" />
      <path d="M540 732l8-4v39l-8 5z" fill="#718a8e" />
      <path d="M539 720l8-2v8l-7 5z" fill="#eef2f3" />
      <path d="M548 722l8-6 4 6-12 6z" fill="#dff0df" />
      <path d="M554 718l6-2-1 7z" fill="#36883b" stroke="none" />
      {[[493, 682], [493, 700], [537, 746], [537, 763]].map(([x, y]) => (
        <g key={y}>
          <ellipse cx={x} cy={y} rx="2.500" ry="5" fill="#f5f8f8" stroke="#466" />
          <path d={`M${x - 2} ${y - 3}v5`} />
        </g>
      ))}
      <ellipse cx="511" cy="671" rx="3.500" ry="2.500" fill="#222" />
      <ellipse cx="525" cy="690" rx="3.500" ry="2.500" fill="#222" />
      <path d="M491 652l48 67M501 656l44 61" fill="none" strokeWidth="1.500" />

      <path d="M1229 383l14 17 6-3 28 43v12l-3 3z" fill="#dfe4e5" />
      <path d="M1243 400l32 50" strokeWidth="2" />
      <path d="M1270 467l7-3v38l-7 3z" fill="#68848c" />
      <path d="M1268 460l8-4v8l-6 3z" fill="#eef2f3" />
      <ellipse cx="1241" cy="404" rx="3.500" ry="2.500" fill="#111" />
      <ellipse cx="1254" cy="425" rx="3" ry="2" fill="#888" />
    </g>

    <SensorClip x={606} y={738} />
    <SensorClip x={900} y={630} />
    <SensorClip x={1154} y={537} />
  </svg>
);

const App = () => {
  const [activeTab, setActiveTab] = useState(7);
  const [selected, setSelected] = useState(7);
  const [filter, setFilter] = useState('');

  return (
    <>
      <GlobalStyle />
      <Desktop>
        <Backdrop>
          <BackdropStrip size={29} fill="#ebebeb" />
          <BackdropStrip size={38} fill="#fff" edge="#ccc" />
          <BackdropStrip size={36} fill="#effdec" edge="#ddd" />
          <BackdropStrip size={57} fill="#f3f3f3" edge="#cce8c4" />
          <BackdropStrip size={53} fill="#fff" edge="#ddd" />
          <BackdropStrip size={20} fill="#f3f3f3" edge="#ddd" grow />
        </Backdrop>
        <AppWindow>
          <Header>
            <Logo>
              <svg width="28" height="28" viewBox="0 0 28 28" fill="none" stroke="#da291c" strokeWidth="2.500" aria-hidden="true">
                <path d="M10 2c5-2 9 0 7 3-1 2-4 3-6 4" />
                <path d="M5 12c7-3 10 0 7 6-2 4-6 7-10 7l6-9" />
                <path d="M27 12c-5-1-9 0-8 3 1 2 5 3 4 6-1 2-5 2-9 1" />
              </svg>
              <span><b>SOLID</b>WORKS</span>
            </Logo>
            <Menu>
              {menus.map(([name, key], index) => (
                <MenuButton key={key} $active={index === 0}>
                  {name}(<u>{key}</u>)
                </MenuButton>
              ))}
            </Menu>
            <PinButton aria-label="pin"><Icon name="pin" size={16} /></PinButton>
            <QuickBar>
              <Tools items={quickTools} />
            </QuickBar>
            <DocumentTitle>HY-100 丝杆模组 *</DocumentTitle>
          </Header>
          <Ribbon>
            <RibbonButton>
              <Icon name="source" />
              启动零
              <br />
              <span>件库</span>
            </RibbonButton>
          </Ribbon>
          <Tabs>
            {ribbonTabs.map(({ latin, cjk, start, end }, index) => (
              <Tab
                key={index}
                $start={start}
                $end={end}
                $mixed={Boolean(cjk)}
                $active={index === activeTab}
                onClick={() => setActiveTab(index)}
              >
                {latin}
                {cjk && <span>{cjk}</span>}
              </Tab>
            ))}
          </Tabs>
          <Body>
            <Docks>
              <DockColumn>
                <Dock $width={53}>
                  <Grip />
                  <DockItems items={featureDock} />
                </Dock>
                <Dock $width={34} $top={5}>
                  <Grip />
                  <DockItems items={referenceDock} />
                </Dock>
              </DockColumn>
              <AnnotationDock />
            </Docks>
            <FeaturePanel>
              <PanelGrip><Knob /></PanelGrip>
              <PanelTabs>
                {panelTabs.map((name, index) => (
                  <PanelTab key={name} aria-label={name} $active={index === 0}>
                    <Icon name={name} />
                  </PanelTab>
                ))}
                <MoreButton aria-label="more">
                  <svg width="8" height="12" viewBox="0 0 8 12" fill="none" stroke="#666" strokeWidth="2">
                    <path d="M1 1l5 5-5 5" />
                  </svg>
                </MoreButton>
              </PanelTabs>
              <FilterBox>
                <Icon name="funnel" />
                <Arrow />
                <FilterInput aria-label="filter" value={filter} onChange={e => setFilter(e.target.value)} />
              </FilterBox>
              <TreeArea>
                <Tree>
                  {treeItems.map((item, index) => (
                    <TreeRow key={index} $level={item.level}>
                      <Expander aria-label={item.fold ? 'expand' : 'item'} disabled={!item.fold}>
                        {item.fold && (
                          <svg width="8" height="8" viewBox="0 0 8 8" fill="#555">
                            <path d={item.open ? 'M0 2h8L4 6z' : 'M2 0v8l4-4z'} />
                          </svg>
                        )}
                      </Expander>
                      <TreeItem $selected={index === selected} onClick={() => setSelected(index)}>
                        <Icon name={item.icon} />
                        <Label><MixedText text={item.label} /></Label>
                      </TreeItem>
                    </TreeRow>
                  ))}
                </Tree>
                <Scrollbar>
                  <ScrollArrow aria-label="scroll up">
                    <svg width="10" height="14" viewBox="0 0 10 14" fill="none" stroke="#555" strokeWidth="2">
                      <path d="M0 10l5-5 5 5" />
                    </svg>
                  </ScrollArrow>
                  <ScrollThumb />
                </Scrollbar>
              </TreeArea>
              <CollapseHandle aria-label="collapse"><Knob /></CollapseHandle>
            </FeaturePanel>
            <Graphics>
              <GraphicsTop>
                <SelectionTools>
                  <MateBar>
                    <IconButton $width={19} aria-label="follow"><Icon name="turn" size={14} /></IconButton>
                    {mateButtons.map((name, index) => (
                      <MateButton key={index} aria-label={name}><Icon name={name} /></MateButton>
                    ))}
                    <IconButton $width={20} aria-label="next">
                      <svg width="7" height="14" viewBox="0 0 7 14" fill="#8f9096">
                        <path d="M0 0v14l7-7z" />
                      </svg>
                    </IconButton>
                  </MateBar>
                  <Crumbs>
                    <Crumb $first aria-label="assembly"><Icon name="asm" /></Crumb>
                    <Crumb aria-label="part"><Icon name="part" /></Crumb>
                  </Crumbs>
                </SelectionTools>
                <HeadsUp>
                  <Tools items={headsUpTools} soft />
                </HeadsUp>
              </GraphicsTop>
              <Stage><Model /></Stage>
              <Watermark>CSDN @技术死肥仔</Watermark>
            </Graphics>
          </Body>
        </AppWindow>
      </Desktop>
    </>
  );
};

export default App;
